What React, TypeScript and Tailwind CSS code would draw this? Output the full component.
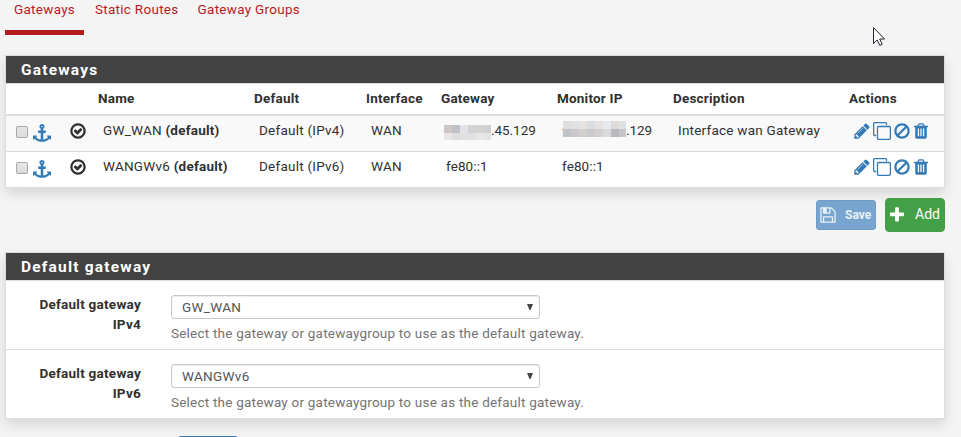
import type { ReactNode } from "react";

const ICONS = {
  anchor:
    "M960 256q0-26-19-45t-45-19-45 19-19 45 19 45 45 19 45-19 19-45zm832 928v352q0 22-20 30-8 2-12 2-12 0-23-9l-93-93q-119 143-318.500 226.500t-429.500 83.500-429.500-83.500-318.500-226.500l-93 93q-9 9-23 9-4 0-12-2-20-8-20-30v-352q0-14 9-23t23-9h352q22 0 30 20 8 19-7 35l-100 100q67 91 189.500 153.500t271.500 82.500v-647h-192q-26 0-45-19t-19-45v-128q0-26 19-45t45-19h192v-163q-58-34-93-92.500t-35-128.500q0-106 75-181t181-75 181 75 75 181q0 70-35 128.500t-93 92.500v163h192q26 0 45 19t19 45v128q0 26-19 45t-45 19h-192v647q149-20 271.500-82.500t189.500-153.500l-100-100q-15-16-7-35 8-20 30-20h352q14 0 23 9t9 23z",
  check:
    "M1299 813l-422 422q-19 19-45 19t-45-19l-294-294q-19-19-19-45t19-45l102-102q19-19 45-19t45 19l147 147 275-275q19-19 45-19t45 19l102 102q19 19 19 45t-19 45zm141 83q0-148-73-273t-198-198-273-73-273 73-198 198-73 273 73 273 198 198 273 73 273-73 198-198 73-273zm224 0q0 209-103 385.500t-279.500 279.500-385.500 103-385.500-103-279.500-279.500-103-385.500 103-385.500 279.500-279.500 385.500-103 385.500 103 279.500 279.500 103 385.500z",
  pencil:
    "M491 1536l91-91-235-235-91 91v107h128v128h107zm523-928q0-22-22-22-10 0-17 7l-542 542q-7 7-7 17 0 22 22 22 10 0 17-7l542-542q7-7 7-17zm-54-192l416 416-832 832h-416v-416zm683 96q0 53-37 90l-166 166-416-416 166-165q36-38 90-38 53 0 91 38l235 234q37 39 37 91z",
  clone:
    "M1664 1632v-1088q0-13-9.500-22.500t-22.500-9.500h-1088q-13 0-22.500 9.500t-9.500 22.500v1088q0 13 9.500 22.500t22.500 9.500h1088q13 0 22.500-9.500t9.500-22.500zm128-1088v1088q0 66-47 113t-113 47h-1088q-66 0-113-47t-47-113v-1088q0-66 47-113t113-47h1088q66 0 113 47t47 113zm-384-384v160h-128v-160q0-13-9.500-22.500t-22.500-9.500h-1088q-13 0-22.500 9.500t-9.500 22.500v1088q0 13 9.500 22.500t22.500 9.500h160v128h-160q-66 0-113-47t-47-113v-1088q0-66 47-113t113-47h1088q66 0 113 47t47 113z",
  ban:
    "M1440 893q0-161-87-295l-754 753q137 89 297 89 111 0 211.500-43.500t173.500-116.500 116-174.500 43-212.500zm-999 299l755-754q-135-91-300-91-148 0-273 73t-198 199-73 274q0 162 89 299zm1223-299q0 157-61 300t-163.500 246-245 164-298.500 61-298.500-61-245-164-163.500-246-61-300 61-299.500 163.500-245.500 245-164 298.500-61 298.500 61 245 164 163.500 245.500 61 299.500z",
  trash:
    "M704 1376v-704q0-14-9-23t-23-9h-64q-14 0-23 9t-9 23v704q0 14 9 23t23 9h64q14 0 23-9t9-23zm256 0v-704q0-14-9-23t-23-9h-64q-14 0-23 9t-9 23v704q0 14 9 23t23 9h64q14 0 23-9t9-23zm256 0v-704q0-14-9-23t-23-9h-64q-14 0-23 9t-9 23v704q0 14 9 23t23 9h64q14 0 23-9t9-23zm-544-992h448l-48-117q-7-9-17-11h-317q-10 2-17 11zm928 32v64q0 14-9 23t-23 9h-96v948q0 83-47 143.500t-113 60.500h-832q-66 0-113-58.500t-47-141.500v-952h-96q-14 0-23-9t-9-23v-64q0-14 9-23t23-9h309l70-167q15-37 54-63t79-26h320q40 0 79 26t54 63l70 167h309q14 0 23 9t9 23z",
  save:
    "M512 1536h768v-384h-768v384zm896 0h128v-896q0-14-10-38.500t-20-34.500l-281-281q-10-10-34-20t-39-10v416q0 40-28 68t-68 28h-576q-40 0-68-28t-28-68v-416h-128v1280h128v-416q0-40 28-68t68-28h832q40 0 68 28t28 68v416zm-384-928v-320q0-13-9.500-22.500t-22.500-9.500h-192q-13 0-22.500 9.500t-9.500 22.500v320q0 13 9.500 22.500t22.500 9.500h192q13 0 22.500-9.500t9.500-22.500zm640 32v928q0 40-28 68t-68 28h-1344q-40 0-68-28t-28-68v-1344q0-40 28-68t68-28h928q40 0 88 20t76 48l280 280q28 28 48 76t20 88z",
  plus:
    "M1600 736v192q0 40-28 68t-68 28h-416v416q0 40-28 68t-68 28h-192q-40 0-68-28t-28-68v-416h-416q-40 0-68-28t-28-68v-192q0-40 28-68t68-28h416v-416q0-40 28-68t68-28h192q40 0 68 28t28 68v416h416q40 0 68 28t28 68z",
};

function Icon({ name, className = "size-[18px]" }: { name: keyof typeof ICONS; className?: string }) {
  return (
    <svg viewBox="0 0 1792 1792" fill="currentColor" className={`shrink-0 ${className}`}>
      <path d={ICONS[name]} />
    </svg>
  );
}

const GATEWAY_MASK = [
  ["#cdc6c4", "#bfc3c7", "#e3e4e8", "#d3d3d4", "#d3d3d4", "#d0d0d2"],
  ["#e8e6e5", "#dfdddc", "#e1e0e0", "#e0e0e5", "#ebe6e3", "#e4e4e4"],
];
const MONITOR_MASK = [
  ["#dcdee0", "#dfe1e2", "#e5e3e0", "#dadddf", "#e5e3e0", "#e7ebf0", "#dedad9", "#dfe0e2"],
  ["#c3c4c8", "#c9c9cb", "#d3cfcc", "#c9c9cd", "#d3cfd0", "#dadada", "#bbb8bd", "#c5c6c9"],
];

function Mask({ rows, className }: { rows: string[][]; className: string }) {
  return (
    <span className={`flex shrink-0 flex-col overflow-hidden ${className}`}>
      {rows.map((row, r) => (
        <span key={r} className="flex">
          {row.map((color, c) => (
            <span key={c} className="h-2 w-2 shrink-0" style={{ backgroundColor: color }} />
          ))}
        </span>
      ))}
    </span>
  );
}

const COLS = "grid grid-cols-[92px_156px_112px_75px_116px_116px_176px_95px]";

function Row({
  name,
  type,
  gateway,
  monitor,
  description,
  className,
}: {
  name: string;
  type: string;
  gateway: ReactNode;
  monitor: ReactNode;
  description?: string;
  className: string;
}) {
  return (
    <div className={`${COLS} pt-[4px] leading-[20px] tracking-[0.23px] ${className}`}>
      <div className="flex">
        <span className="ml-[10px] mt-[6px] size-3 shrink-0 rounded-[2px] border border-[#a8a8a8] bg-linear-to-b from-[#e6e6e6] to-[#dcdcdc]" />
        <Icon name="anchor" className="ml-[4.500px] mt-[3.500px] size-[18px] text-[#337ab7]" />
        <Icon name="check" className="ml-[18px] mt-[1.500px] size-[18px]" />
      </div>
      <div className="pl-[5px]">
        {name} <b className="font-bold">(default)</b>
      </div>
      <div className="pl-[5px]">{type}</div>
      <div className="pl-[5px]">WAN</div>
      <div className="flex">{gateway}</div>
      <div className="flex">{monitor}</div>
      <div className="pl-[5px]">{description}</div>
      <div className="flex pl-[4px] pt-[2px] text-[#337ab7]">
        <Icon name="pencil" />
        <Icon name="clone" className="ml-[2px] size-[18px]" />
        <Icon name="ban" className="ml-[2px] size-[18px]" />
        <Icon name="trash" className="ml-px size-[18px]" />
      </div>
    </div>
  );
}

function Panel({ title, className, children }: { title: string; className: string; children: ReactNode }) {
  return (
    <section className={`ml-[5px] w-[940px] border border-[#dcdcdc] bg-white shadow-[0_6px_12px_rgba(0,0,0,0.12)] ${className}`}>
      <h2 className="h-7 border-b border-[#dcdcdc] bg-[#424242] pl-[15px] text-[15.5px] font-bold leading-[28px] tracking-[1.2px] text-white">
        {title}
      </h2>
      {children}
    </section>
  );
}

function Field({ version, value, className }: { version: string; value: string; className: string }) {
  return (
    <div className={`flex ${className}`}>
      <div className="w-[135px] pt-[13px] text-right font-bold leading-[20px] tracking-[0.25px]">
        Default gateway
        <br />
        {version}
      </div>
      <div className="ml-[30px] pt-[14px]">
        <div className="flex h-6 w-[369px] items-center justify-between rounded-[3px] border border-[#c8c8c8] pl-[10px] pr-[5px] text-[#555] shadow-[inset_0_1px_1px_rgba(0,0,0,0.075)]">
          <span className="tracking-[0.3px]">{value}</span>
          <svg viewBox="0 0 8 8" className="size-2 text-[#444]" fill="currentColor">
            <path d="M1 1h6L4.500 7h-1z" />
          </svg>
        </div>
        <p className="mt-[4px] whitespace-nowrap leading-[20px] tracking-[0.215px] text-[#737373]">
          Select the gateway or gatewaygroup to use as the default gateway.
        </p>
      </div>
    </div>
  );
}

export default function App() {
  return (
    <div className="relative h-[437px] w-[961px] overflow-hidden bg-[#f4f4f4] font-[Roboto,sans-serif] text-[13.5px] text-[#303030]">
      <nav className="flex h-[35px] pl-[5px] leading-[18px] tracking-[0.28px] text-[#b71c1c]">
        <a className="w-[79px] border-b-[5px] border-[#b71c1c] pl-[9px]">Gateways</a>
        <a className="pl-[11px]">Static Routes</a>
        <a className="pl-[19px]">Gateway Groups</a>
      </nav>

      <Panel title="Gateways" className="mt-[20px] h-[133px]">
        <div className={`${COLS} h-8 border-b-2 border-[#dddddd] pt-[4px] font-bold leading-[20px] tracking-[0.2px]`}>
          <span />
          <span>Name</span>
          <span>Default</span>
          <span>Interface</span>
          <span>Gateway</span>
          <span>Monitor IP</span>
          <span>Description</span>
          <span>Actions</span>
        </div>
        <Row
          className="h-[35px] bg-[#f9f9f9]"
          name="GW_WAN"
          type="Default (IPv4)"
          gateway={
            <>
              <Mask rows={GATEWAY_MASK} className="ml-[3px] mt-[5px] h-[15px] w-[47px]" />
              <span className="tracking-[-0.05px]">.45.129</span>
            </>
          }
          monitor={
            <>
              <span className="ml-[5px] mt-[8px] h-[3px] w-px bg-[#f3cf92]" />
              <Mask rows={MONITOR_MASK} className="mt-px h-4 w-[63px]" />
              <span className="tracking-[-0.1px]">.129</span>
            </>
          }
          description="Interface wan Gateway"
        />
        <Row
          className="h-[36px] border-t border-[#dddddd]"
          name="WANGWv6"
          type="Default (IPv6)"
          gateway={<span className="pl-[5px] tracking-[0.1px]">fe80::1</span>}
          monitor={<span className="pl-[5px] tracking-[0.1px]">fe80::1</span>}
        />
      </Panel>

      <div className="flex items-center pl-[816px] pt-[10px]">
        <button className="flex h-[30px] w-[60px] items-center rounded-[3px] border border-[#6f9dc7] bg-[#78a5cf] pl-[2px] text-[12px] font-bold text-[#e9f1f8]">
          <Icon name="save" />
          <span className="ml-[8px]">Save</span>
        </button>
        <button className="ml-[9px] flex h-[34px] w-[60px] items-center rounded-[4px] border border-[#43a047] bg-[#43a047] pb-px pl-[2px] text-[14px] text-white">
          <Icon name="plus" />
          <span className="ml-[9px]">Add</span>
        </button>
      </div>

      <Panel title="Default gateway" className="mt-[20px] h-[167px]">
        <Field version="IPv4" value="GW_WAN" className="h-[69px] border-b border-[#dddddd]" />
        <Field version="IPv6" value="WANGWv6" className="h-[68px]" />
      </Panel>

      <div className="ml-[178px] mt-[17px] h-8 w-[60px] rounded-[3px] bg-[#337ab7]" />

      <svg viewBox="0 0 12 19" className="absolute left-[873px] top-[27px] h-[19px] w-3">
        <path
          d="M.5.500v16l3.700-3.500 2.600 5.400 2.400-1.100-2.500-5.300h4.800z"
          fill="white"
          stroke="#22222e"
          strokeWidth="1"
        />
      </svg>
    </div>
  );
}
